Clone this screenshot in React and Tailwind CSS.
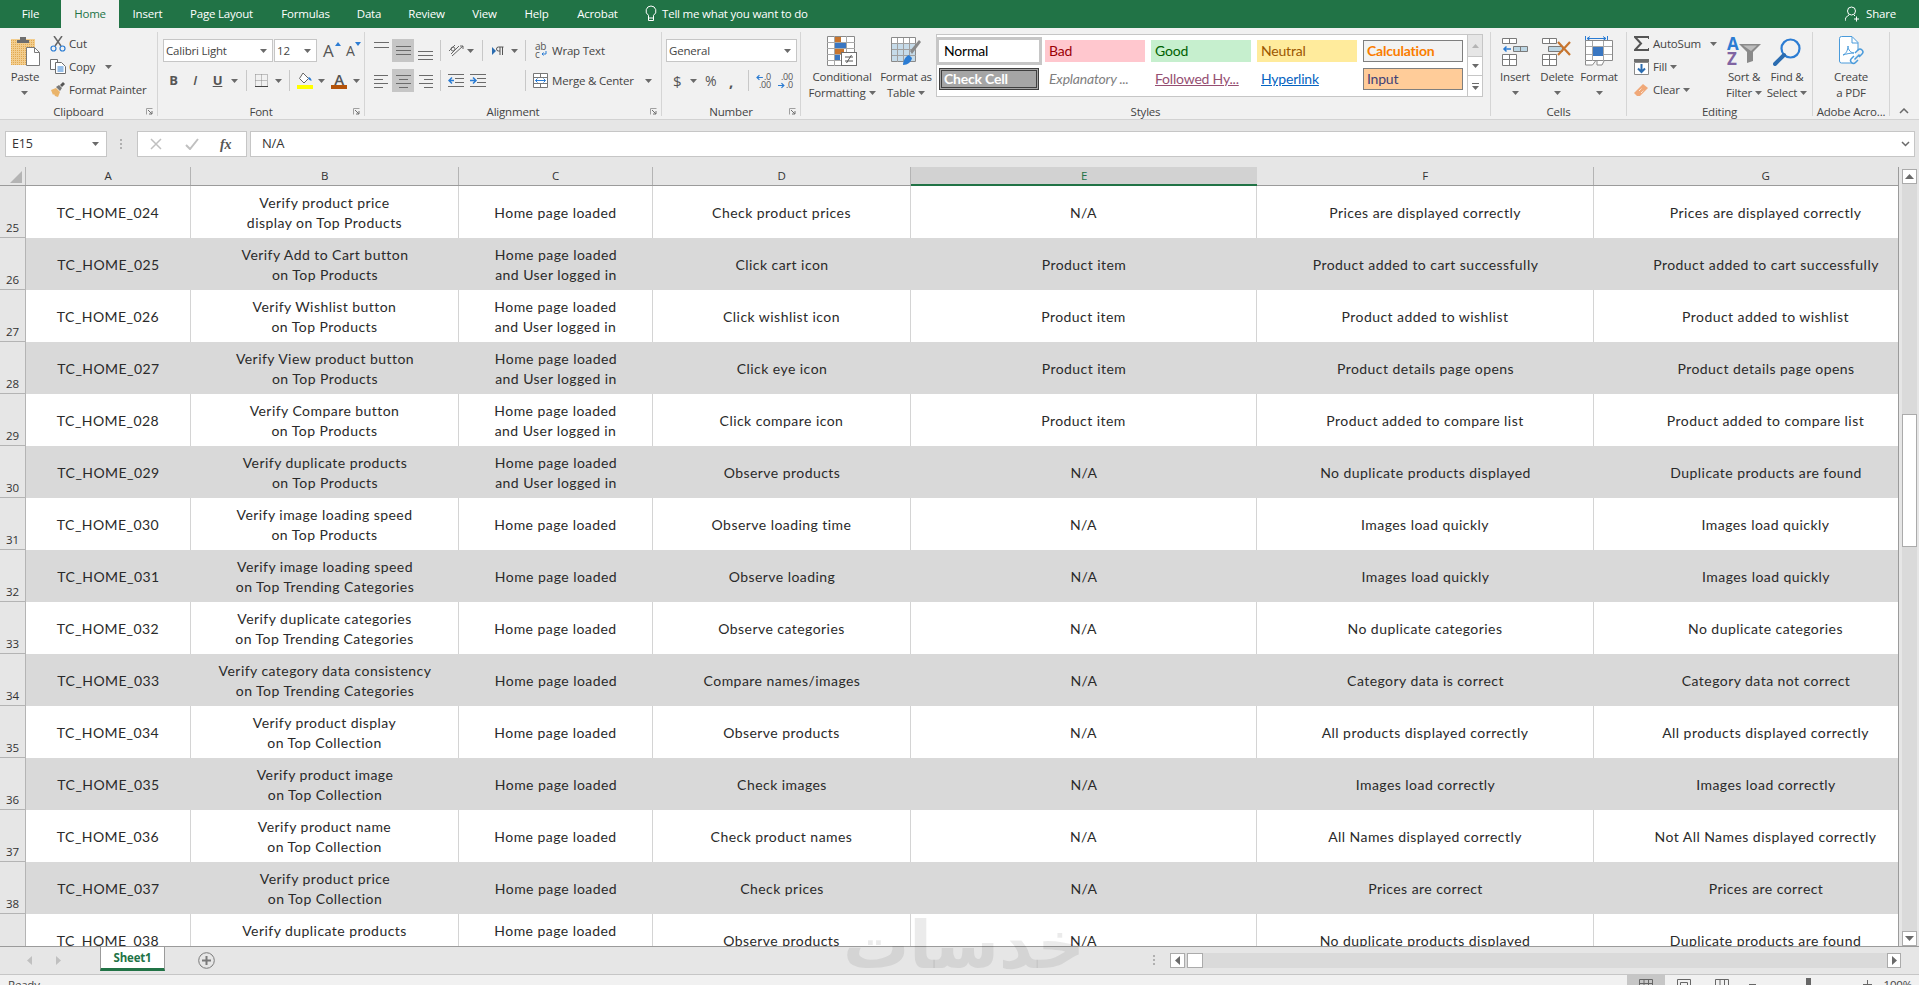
import React from "react";

const HP = ["Home page loaded"];
const HU = ["Home page loaded", "and User logged in"];

const rows = [
  [25, "TC_HOME_024", ["Verify product price", "display on Top Products"], HP, "Check product prices", "N/A", "Prices are displayed correctly", "Prices are displayed correctly"],
  [26, "TC_HOME_025", ["Verify Add to Cart button", "on Top Products"], HU, "Click cart icon", "Product item", "Product added to cart successfully", "Product added to cart successfully"],
  [27, "TC_HOME_026", ["Verify Wishlist button", "on Top Products"], HU, "Click wishlist icon", "Product item", "Product added to wishlist", "Product added to wishlist"],
  [28, "TC_HOME_027", ["Verify View product button", "on Top Products"], HU, "Click eye icon", "Product item", "Product details page opens", "Product details page opens"],
  [29, "TC_HOME_028", ["Verify Compare button", "on Top Products"], HU, "Click compare icon", "Product item", "Product added to compare list", "Product added to compare list"],
  [30, "TC_HOME_029", ["Verify duplicate products", "on Top Products"], HU, "Observe products", "N/A", "No duplicate products displayed", "Duplicate products are found"],
  [31, "TC_HOME_030", ["Verify image loading speed", "on Top Products"], HP, "Observe loading time", "N/A", "Images load quickly", "Images load quickly"],
  [32, "TC_HOME_031", ["Verify image loading speed", "on Top Trending Categories"], HP, "Observe loading", "N/A", "Images load quickly", "Images load quickly"],
  [33, "TC_HOME_032", ["Verify duplicate categories", "on Top Trending Categories"], HP, "Observe categories", "N/A", "No duplicate categories", "No duplicate categories"],
  [34, "TC_HOME_033", ["Verify category data consistency", "on Top Trending Categories"], HP, "Compare names/images", "N/A", "Category data is correct", "Category data not correct"],
  [35, "TC_HOME_034", ["Verify product display", "on Top Collection"], HP, "Observe products", "N/A", "All products displayed correctly", "All products displayed correctly"],
  [36, "TC_HOME_035", ["Verify product image", "on Top Collection"], HP, "Check images", "N/A", "Images load correctly", "Images load correctly"],
  [37, "TC_HOME_036", ["Verify product name", "on Top Collection"], HP, "Check product names", "N/A", "All Names displayed correctly", "Not All Names displayed correctly"],
  [38, "TC_HOME_037", ["Verify product price", "on Top Collection"], HP, "Check prices", "N/A", "Prices are correct", "Prices are correct"],
  [39, "TC_HOME_038", ["Verify duplicate products", "on Top Collection"], HU, "Observe products", "N/A", "No duplicate products displayed", "Duplicate products are found"],
];

const colWidths = ["w-[165px]", "w-[268px]", "w-[194px]", "w-[258px]", "w-[346px]", "w-[337px]", "w-[344px]"];

const tabs = [
  ["File", "w-[61px]"],
  ["Home", "w-[58px]"],
  ["Insert", "w-[57px]"],
  ["Page Layout", "w-[91px]"],
  ["Formulas", "w-[77px]"],
  ["Data", "w-[50px]"],
  ["Review", "w-[65px]"],
  ["View", "w-[51px]"],
  ["Help", "w-[53px]"],
  ["Acrobat", "w-[69px]"],
];

function Caret({ className = "" }) {
  return (
    <svg width="7" height="4" viewBox="0 0 7 4" className={"shrink-0 " + className}>
      <path d="M0 0h7L3.500 4z" fill="#6a6a6a" />
    </svg>
  );
}

function Sep({ className = "" }) {
  return <div className={"w-px h-[21px] bg-[#c8c8c8] shrink-0 " + className} />;
}

function Lines({ w = 15, h = 16, lines, className = "" }) {
  return (
    <svg width={w} height={h} viewBox={`0 0 ${w} ${h}`} className={"shrink-0 " + className}>
      {lines.map(([a, b, y], i) => (
        <line key={i} x1={a} x2={b} y1={y + 0.5} y2={y + 0.5} stroke="#6b6b6b" strokeWidth="1" />
      ))}
    </svg>
  );
}

function Launcher() {
  return (
    <svg width="7" height="7" viewBox="0 0 7 7" className="absolute right-[4px] bottom-[1px]">
      <path d="M.5 6.500V.5h6" fill="none" stroke="#a0a0a0" />
      <path d="M2 2l4 4M6 3v3H3" fill="none" stroke="#707070" />
    </svg>
  );
}

function Group({ className, label, launcher, children }) {
  return (
    <div className={"relative flex flex-col h-[84px] mt-[4px] border-r border-[#d5d5d5] shrink-0 " + className}>
      <div className="h-[72px] shrink-0">{children}</div>
      <div className="h-[16px] shrink-0 leading-[16px] text-center text-[#444] whitespace-nowrap">{label}</div>
      {launcher && <Launcher />}
    </div>
  );
}

function BigButton({ className, icon, lines, caretInline, caretBelow }) {
  return (
    <div className={"flex flex-col items-center shrink-0 " + className}>
      <div className="h-[34px] flex items-end justify-center">{icon}</div>
      <div className="mt-[3px]">
        {lines.map((l, i) => (
          <div key={i} className="h-[16px] leading-[16px] flex items-center justify-center gap-[3px] whitespace-nowrap text-[#444]">
            {l}
            {caretInline && i === lines.length - 1 && <Caret />}
          </div>
        ))}
        {caretBelow && (
          <div className="h-[16px] flex items-center justify-center">
            <Caret />
          </div>
        )}
      </div>
    </div>
  );
}

function SmallRow({ icon, children, caret }) {
  return (
    <div className="h-[23px] flex items-center whitespace-nowrap text-[#444]">
      <div className="w-[19px] flex shrink-0">{icon}</div>
      {children}
      {caret}
    </div>
  );
}

function PasteIcon() {
  return (
    <svg width="29" height="30" viewBox="0 0 29 30">
      <defs>
        <pattern id="dots" width="2" height="2" patternUnits="userSpaceOnUse">
          <rect width="2" height="2" fill="#f2cd8e" />
          <rect width="1" height="1" fill="#e2a951" />
        </pattern>
      </defs>
      <rect x="0" y="3" width="24" height="26" fill="url(#dots)" />
      <path d="M6 4h3V1h6v3h3v3H6z" fill="#6e6e6e" />
      <path d="M15.500 11.500h8l5 5v13h-13z" fill="#fff" stroke="#7a7a7a" />
      <path d="M23.500 11.500v5h5" fill="none" stroke="#7a7a7a" />
    </svg>
  );
}

function CutIcon() {
  return (
    <svg width="16" height="16" viewBox="0 0 16 16">
      <path d="M12 0L5 10M4 0l7 10" stroke="#666" strokeWidth="1.500" fill="none" />
      <circle cx="3.500" cy="12.500" r="2.500" fill="none" stroke="#2b7cd3" strokeWidth="1.200" />
      <circle cx="12.500" cy="12.500" r="2.500" fill="none" stroke="#2b7cd3" strokeWidth="1.200" />
    </svg>
  );
}

function CopyIcon() {
  return (
    <svg width="16" height="15" viewBox="0 0 16 15">
      <path d="M.5.5h7v10h-7z" fill="#fff" stroke="#6e6e6e" />
      <path d="M5.500 3.500h6l4 4v7h-10z" fill="#fff" stroke="#6e6e6e" />
      <path d="M7.500 8h6M7.500 10h6M7.500 12h6" stroke="#2b7cd3" />
    </svg>
  );
}

function PainterIcon() {
  return (
    <svg width="16" height="15" viewBox="0 0 16 15">
      <path d="M1 8l5-2 4 4-2 5-3-1-1-2-1 1z" fill="#eab46a" />
      <path d="M6 5l3-2 3 3-2 3z" fill="#777" />
      <path d="M10 3l3-3 2 2-3 3z" fill="#555" />
    </svg>
  );
}

function BordersIcon() {
  return (
    <svg width="13" height="13" viewBox="0 0 13 13">
      <path d="M.5.5h12v12M.5.5v12M6.500.5v12M.5 6.500h12" stroke="#8a8a8a" strokeDasharray="1 1" fill="none" />
      <path d="M0 12.500h13" stroke="#444" />
    </svg>
  );
}

function FillIcon() {
  return (
    <svg width="16" height="17" viewBox="0 0 16 17">
      <path d="M6 1l5.500 5.500L7 11 2.500 6.500z" fill="#fff" stroke="#666" />
      <path d="M11.500 5c2 .5 3 2 3 4-1.500-.5-2-1-3-2z" fill="#2b7cd3" />
      <rect x="0" y="13" width="16" height="4" fill="#ffff00" />
    </svg>
  );
}

function FontColorIcon() {
  return (
    <div className="w-[16px] h-[17px] flex flex-col items-center shrink-0">
      <div className="h-[13px] leading-[14px] text-[15px] font-semibold text-[#555]">A</div>
      <div className="w-[16px] h-[4px] bg-[#b45309]" />
    </div>
  );
}

function OrientIcon() {
  return (
    <svg width="16" height="16" viewBox="0 0 16 16">
      <path d="M1 8l6-6M3 11l8-8" stroke="#666" fill="none" />
      <path d="M4 13L15 3m0 0h-3m3 0v3" stroke="#666" fill="none" />
      <circle cx="5" cy="6" r="2" fill="none" stroke="#666" />
    </svg>
  );
}

function RtlIcon() {
  return (
    <svg width="12" height="10" viewBox="0 0 12 10">
      <path d="M0 1l4 4-4 4z" fill="#2b6cb0" />
      <path d="M8 1H6.500a2 2 0 000 4H8M8 1v8M10.500 1v8M8 1h3.500" stroke="#555" fill="none" />
    </svg>
  );
}

function IndentIcon({ flip }) {
  return (
    <svg width="16" height="13" viewBox="0 0 16 13">
      <path d="M0 .5h16M7 4.500h9M7 8.500h9M0 12.500h16" stroke="#6b6b6b" />
      {flip ? (
        <path d="M0 6.500h5M3 3.500l3 3-3 3" stroke="#2b7cd3" strokeWidth="1.500" fill="none" />
      ) : (
        <path d="M6 6.500H1M4 3.500l-3 3 3 3" stroke="#2b7cd3" strokeWidth="1.500" fill="none" />
      )}
    </svg>
  );
}

function WrapIcon() {
  return (
    <div className="w-[12px] h-[17px] text-[10px] leading-[8px] text-[#555] shrink-0">
      <div>ab</div>
      <div className="flex items-center">
        c
        <svg width="6" height="6" viewBox="0 0 6 6" className="ml-[1px]">
          <path d="M5 0v3H1m1.500-1.500L1 3l1.500 1.500" stroke="#2b7cd3" fill="none" />
        </svg>
      </div>
    </div>
  );
}

function MergeIcon() {
  return (
    <svg width="15" height="15" viewBox="0 0 15 15">
      <path d="M.5.5h14v14H.5zM.5 4.500h14M.5 10.500h14M7.500.5v4M7.500 10.500v4" fill="#fff" stroke="#777" />
      <path d="M2.500 7.500h10M4.500 5.500l-2 2 2 2M10.500 5.500l2 2-2 2" stroke="#2b7cd3" fill="none" />
    </svg>
  );
}

function DecimalIcon({ inc }) {
  return (
    <div className="w-[15px] h-[15px] flex flex-col text-[9px] leading-[8px] text-[#555] shrink-0">
      <div className="flex items-center justify-end gap-[1px]">
        {!inc && (
          <svg width="7" height="7" viewBox="0 0 7 7">
            <path d="M7 3.500H1M3.500 1L1 3.500 3.500 6" stroke="#2b7cd3" strokeWidth="1.200" fill="none" />
          </svg>
        )}
        {inc ? ".00" : ".0"}
      </div>
      <div className="flex items-center justify-end gap-[1px]">
        {inc && (
          <svg width="7" height="7" viewBox="0 0 7 7">
            <path d="M0 3.500h6M3.500 1L6 3.500 3.500 6" stroke="#2b7cd3" strokeWidth="1.200" fill="none" />
          </svg>
        )}
        {inc ? ".0" : ".00"}
      </div>
    </div>
  );
}

function CondIcon() {
  return (
    <svg width="30" height="30" viewBox="0 0 30 30">
      <path d="M.5.5h27v29H.5z" fill="#fff" stroke="#8a8a8a" />
      <path d="M7.500 0v30M19.500 0v30M0 6.500h28M0 12.500h28M0 18.500h28M0 24.500h28" stroke="#a8a8a8" />
      <rect x="8" y="1" width="6" height="5" fill="#c8752e" />
      <rect x="8" y="7" width="11" height="5" fill="#3a77c2" />
      <rect x="8" y="13" width="9" height="5" fill="#c8752e" />
      <rect x="8" y="19" width="5" height="5" fill="#3a77c2" />
      <rect x="14.500" y="16.500" width="15" height="13" fill="#fff" stroke="#6e6e6e" />
      <path d="M18 21h8M18 25h8M24.500 19l-5 8" stroke="#555" fill="none" />
    </svg>
  );
}

function TableIcon() {
  return (
    <svg width="30" height="30" viewBox="0 0 30 30">
      <path d="M.5 1.500h24v24H.5z" fill="#fff" stroke="#8a8a8a" />
      <rect x="1" y="8" width="23" height="17" fill="#c6dbe9" />
      <path d="M6.500 2v24M12.500 2v24M18.500 2v24M1 7.500h24M1 13.500h24M1 19.500h24" stroke="#a0a0a0" />
      <path d="M19 15l9-11 2 2-9 12z" fill="#8a8a8a" />
      <path d="M12 29c0-5 3-9 6-10l3 3c-1 4-4 7-9 7z" fill="#2b7cd3" />
    </svg>
  );
}

function InsertIcon() {
  return (
    <svg width="26" height="28" viewBox="0 0 26 28">
      <path d="M.5.5h14v5H.5zM7.500.5v5" fill="#fff" stroke="#7a7a7a" />
      <path d="M11.500 8.500h14v5h-14zM18.500 8.500v5" fill="#bcd6e4" stroke="#7a7a7a" />
      <path d="M9 11H2M4.500 8.500L2 11l2.500 2.500" stroke="#2b7cd3" strokeWidth="1.500" fill="none" />
      <path d="M.5 16.500h14v11H.5zM7.500 16.500v11M.5 21.500h14" fill="#fff" stroke="#7a7a7a" />
    </svg>
  );
}

function DeleteIcon() {
  return (
    <svg width="30" height="28" viewBox="0 0 30 28">
      <path d="M.5.5h14v5H.5zM7.500.5v5" fill="#fff" stroke="#7a7a7a" />
      <path d="M6.500 8.500h14v5h-14z" fill="#bcd6e4" stroke="#7a7a7a" />
      <path d="M.5 16.500h14v11H.5zM7.500 16.500v11M.5 21.500h14" fill="#fff" stroke="#7a7a7a" />
      <path d="M16 4l12 13M28 4L16 17" stroke="#c8752e" strokeWidth="2.200" fill="none" />
    </svg>
  );
}

function FormatIcon() {
  return (
    <svg width="28" height="31" viewBox="0 0 28 31">
      <path d="M.5 1v5M22.500 1v5M2 3.500h19M5 1.500L2 3.500l3 2M18 1.500l3 2-3 2" stroke="#2b7cd3" fill="none" />
      <path d="M.5 5.500h27v20H.5z" fill="#fff" stroke="#8a8a8a" />
      <path d="M7.500 6v20M18.500 6v20M1 11.500h26M1 19.500h26" stroke="#a8a8a8" />
      <rect x="8" y="12" width="10" height="9" fill="#3a77c2" />
      <path d="M.5 26v4h7l3-4M12 26v4h5l2-4" fill="#fff" stroke="#8a8a8a" />
    </svg>
  );
}

function SumIcon() {
  return (
    <svg width="15" height="15" viewBox="0 0 15 15">
      <path d="M15 3V1H1l6 6.500L1 14h14v-2" fill="none" stroke="#555" strokeWidth="2" />
    </svg>
  );
}

function DownFillIcon() {
  return (
    <svg width="15" height="16" viewBox="0 0 15 16">
      <rect x="0" y="0" width="15" height="3" fill="#6e6e6e" />
      <path d="M.5 3.500h14v12H.5z" fill="#fff" stroke="#8a8a8a" />
      <path d="M7.500 5v8M4 9.500l3.500 3.500L11 9.500" stroke="#2b6cb0" strokeWidth="2" fill="none" />
    </svg>
  );
}

function ClearIcon() {
  return (
    <svg width="15" height="14" viewBox="0 0 15 14">
      <path d="M0 10l9-9 5 4-8 8H3z" fill="#f0a878" />
      <path d="M5 8l3-3M7 10l3-3" stroke="#fff" strokeDasharray="1 1" />
    </svg>
  );
}

function SortIcon() {
  return (
    <div className="relative w-[34px] h-[30px]">
      <div className="text-[17px] leading-[15px] h-[15px] font-bold text-[#2b7cd3]">A</div>
      <div className="text-[17px] leading-[15px] h-[15px] font-bold text-[#8064a2]">Z</div>
      <svg width="22" height="20" viewBox="0 0 22 20" className="absolute right-0 top-[7px]">
        <path d="M0 1h22l-8 8v9l-6 2V9z" fill="#8a8a8a" />
        <path d="M4 2.500h14l-6 5.500z" fill="#bdbdbd" />
      </svg>
    </div>
  );
}

function FindIcon() {
  return (
    <svg width="28" height="28" viewBox="0 0 28 28">
      <circle cx="17.500" cy="10.500" r="9" fill="none" stroke="#2b7cd3" strokeWidth="2.200" />
      <path d="M11 17L2 26" stroke="#2b6cb0" strokeWidth="4" strokeLinecap="round" />
    </svg>
  );
}

function PdfIcon() {
  return (
    <svg width="26" height="30" viewBox="0 0 26 30">
      <path d="M14 27H3.500a2 2 0 01-2-2V2.500a2 2 0 012-2H14l6 6v8" fill="#fff" stroke="#4a9bdb" />
      <path d="M14 1v6h6" fill="none" stroke="#4a9bdb" />
      <path d="M5 19c3-1 5-5 5-9 0 4 3 7 6 7-4 0-8 1-11 2z" fill="none" stroke="#4a9bdb" />
      <path d="M17 17l3-3a2.800 2.800 0 014 4l-3 3M20 24l-2.500 2.500a2.800 2.800 0 01-4-4L16 20M16.500 23.500l5-5" fill="none" stroke="#4a9bdb" strokeWidth="1.500" />
    </svg>
  );
}

function Combo({ className, text }) {
  return (
    <div className={"h-[23px] bg-white border border-[#c6c6c6] flex items-center justify-between shrink-0 pl-[2px] pr-[5px] text-[#444] " + className}>
      <span>{text}</span>
      <Caret />
    </div>
  );
}

function StyleCell({ className, children }) {
  return (
    <div className={"h-[22px] w-[100px] flex items-center pb-[2px] whitespace-nowrap overflow-hidden font-['Lato',sans-serif] text-[14px] " + className}>
      {children}
    </div>
  );
}

function Ribbon() {
  const hl = "w-[22px] h-[23px] bg-[#c6c6c6] flex items-center justify-center shrink-0";
  return (
    <div className="h-[92px] bg-[#f1f1f1] border-b border-[#d2d2d2] flex shrink-0">
      <Group className="w-[158px]" label="Clipboard" launcher>
        <div className="flex">
          <BigButton className="w-[50px]" icon={<PasteIcon />} lines={["Paste"]} caretBelow />
          <div className="flex flex-col">
            <SmallRow icon={<CutIcon />}>Cut</SmallRow>
            <SmallRow icon={<CopyIcon />} caret={<Caret className="ml-[10px]" />}>Copy</SmallRow>
            <SmallRow icon={<PainterIcon />}>Format Painter</SmallRow>
          </div>
        </div>
      </Group>

      <Group className="w-[207px]" label="Font" launcher>
        <div className="flex items-center mt-[7px] h-[23px] pl-[5px]">
          <Combo className="w-[110px]" text="Calibri Light" />
          <Combo className="w-[43px] ml-[1px]" text="12" />
          <div className="relative ml-[6px] w-[16px] text-[17px] leading-[20px] text-[#555]">
            A
            <svg width="6" height="4" viewBox="0 0 6 4" className="absolute right-[-2px] top-[1px]">
              <path d="M0 4h6L3 0z" fill="#2b7cd3" />
            </svg>
          </div>
          <div className="relative ml-[7px] w-[13px] text-[14px] leading-[20px] text-[#555]">
            A
            <svg width="6" height="4" viewBox="0 0 6 4" className="absolute right-[-2px] top-[1px]">
              <path d="M0 0h6L3 4z" fill="#2b7cd3" />
            </svg>
          </div>
        </div>
        <div className="flex items-center mt-[7px] h-[23px] pl-[5px] text-[13px] text-[#555]">
          <div className="w-[21px] text-center font-bold">B</div>
          <div className="w-[22px] text-center italic font-semibold">I</div>
          <div className="w-[23px] text-center font-bold underline">U</div>
          <Caret className="ml-[2px]" />
          <Sep className="ml-[8px]" />
          <div className="ml-[8px] flex"><BordersIcon /></div>
          <Caret className="ml-[7px]" />
          <Sep className="ml-[7px]" />
          <div className="ml-[7px] flex"><FillIcon /></div>
          <Caret className="ml-[5px]" />
          <div className="ml-[6px]"><FontColorIcon /></div>
          <Caret className="ml-[6px]" />
        </div>
      </Group>

      <Group className="w-[297px]" label="Alignment" launcher>
        <div className="flex items-center mt-[7px] h-[23px]">
          <Lines className="ml-[9px]" h={23} lines={[[0, 15, 3], [0, 15, 8]]} />
          <div className={hl + " ml-[3px]"}><Lines h={11} lines={[[0, 15, 1], [0, 15, 5], [0, 15, 9]]} /></div>
          <Lines className="ml-[4px]" h={23} lines={[[0, 15, 12], [0, 15, 16], [0, 15, 20]]} />
          <Sep className="ml-[7px]" />
          <div className="ml-[7px] flex"><OrientIcon /></div>
          <Caret className="ml-[3px]" />
          <Sep className="ml-[8px]" />
          <div className="ml-[9px] flex"><RtlIcon /></div>
          <Caret className="ml-[7px]" />
          <Sep className="ml-[7px]" />
          <div className="ml-[9px]"><WrapIcon /></div>
          <span className="ml-[5px] text-[#444] whitespace-nowrap">Wrap Text</span>
        </div>
        <div className="flex items-center mt-[7px] h-[23px]">
          <Lines className="ml-[9px]" h={14} lines={[[0, 14, 1], [0, 9, 5], [0, 14, 9], [0, 9, 13]]} />
          <div className={hl + " ml-[3px]"}><Lines h={14} lines={[[0, 15, 1], [3, 12, 5], [0, 15, 9], [3, 12, 13]]} /></div>
          <Lines className="ml-[4px]" h={14} lines={[[1, 15, 1], [6, 15, 5], [1, 15, 9], [6, 15, 13]]} />
          <Sep className="ml-[7px]" />
          <div className="ml-[7px] flex"><IndentIcon /></div>
          <div className="ml-[6px] flex"><IndentIcon flip /></div>
          <Sep className="ml-[39px]" />
          <div className="ml-[7px] flex"><MergeIcon /></div>
          <span className="ml-[4px] w-[93px] shrink-0 text-[#444] whitespace-nowrap">Merge &amp; Center</span>
          <Caret />
        </div>
      </Group>

      <Group className="w-[139px]" label="Number" launcher>
        <div className="flex items-center mt-[7px] h-[23px] pl-[4px]">
          <Combo className="w-[131px]" text="General" />
        </div>
        <div className="flex items-center mt-[7px] h-[23px] text-[#555]">
          <div className="ml-[11px] w-[10px] text-[15px] leading-[20px]">$</div>
          <Caret className="ml-[7px]" />
          <div className="ml-[8px] w-[12px] text-[14px] leading-[20px]">%</div>
          <div className="ml-[12px] w-[6px] text-[15px] leading-[16px] font-bold">,</div>
          <Sep className="ml-[13px]" />
          <div className="ml-[7px]"><DecimalIcon /></div>
          <div className="ml-[7px]"><DecimalIcon inc /></div>
        </div>
      </Group>

      <Group className="w-[690px]" label="Styles">
        <div className="flex pl-[7px]">
          <BigButton className="w-[68px]" icon={<CondIcon />} lines={["Conditional", "Formatting"]} caretInline />
          <BigButton className="w-[60px]" icon={<TableIcon />} lines={["Format as", "Table"]} caretInline />
          <div className="mt-[2px] w-[547px] h-[63px] bg-white border border-[#c6c6c6] flex justify-between">
            <div className="grid grid-cols-[repeat(5,100px)] content-start gap-x-[6px] gap-y-[6px] pl-[2px] pt-[5px]">
              <StyleCell className="bg-white outline-[3px] outline-[#c6c6c6] pl-[5px] text-black">Normal</StyleCell>
              <StyleCell className="bg-[#ffc7ce] text-[#9c0006] pl-[4px]">Bad</StyleCell>
              <StyleCell className="bg-[#c6efce] text-[#006100] pl-[4px]">Good</StyleCell>
              <StyleCell className="bg-[#ffeb9c] text-[#9c5700] pl-[4px]">Neutral</StyleCell>
              <StyleCell className="bg-[#f2f2f2] border border-[#7f7f7f] text-[#fa7d00] font-bold pl-[3px]">Calculation</StyleCell>
              <StyleCell className="bg-[#a5a5a5] border-[3px] border-double border-[#3f3f3f] text-white font-bold pl-[2px]">Check Cell</StyleCell>
              <StyleCell className="text-[#7f7f7f] italic pl-[4px]">Explanatory ...</StyleCell>
              <StyleCell className="text-[#954f72] pl-[4px]"><span className="underline">Followed Hy...</span></StyleCell>
              <StyleCell className="text-[#0563c1] pl-[4px]"><span className="underline">Hyperlink</span></StyleCell>
              <StyleCell className="bg-[#ffcc99] border border-[#7f7f7f] text-[#3f3f76] pl-[3px]">Input</StyleCell>
            </div>
            <div className="w-[15px] border-l border-[#c6c6c6] flex flex-col shrink-0">
              <div className="h-[21px] bg-[#e6e6e6] flex items-center justify-center">
                <Caret className="rotate-180 opacity-40" />
              </div>
              <div className="h-[20px] flex items-center justify-center border-y border-[#c6c6c6]"><Caret /></div>
              <div className="flex-1 flex flex-col items-center justify-center gap-[2px]">
                <div className="w-[7px] h-px bg-[#6a6a6a]" />
                <Caret />
              </div>
            </div>
          </div>
        </div>
      </Group>

      <Group className="w-[136px]" label="Cells">
        <div className="flex pl-[3px]">
          <BigButton className="w-[42px]" icon={<InsertIcon />} lines={["Insert"]} caretBelow />
          <BigButton className="w-[42px]" icon={<DeleteIcon />} lines={["Delete"]} caretBelow />
          <BigButton className="w-[42px]" icon={<FormatIcon />} lines={["Format"]} caretBelow />
        </div>
      </Group>

      <Group className="w-[186px]" label="Editing">
        <div className="flex">
          <div className="w-[95px] pl-[7px] flex flex-col shrink-0">
            <SmallRow icon={<SumIcon />} caret={<Caret className="ml-[9px]" />}>AutoSum</SmallRow>
            <SmallRow icon={<DownFillIcon />} caret={<Caret className="ml-[3px]" />}>Fill</SmallRow>
            <SmallRow icon={<ClearIcon />} caret={<Caret className="ml-[3px]" />}>Clear</SmallRow>
          </div>
          <BigButton className="w-[44px]" icon={<SortIcon />} lines={["Sort &", "Filter"]} caretInline />
          <BigButton className="w-[42px]" icon={<FindIcon />} lines={["Find &", "Select"]} caretInline />
        </div>
      </Group>

      <Group className="w-[77px]" label="Adobe Acro...">
        <BigButton className="w-full" icon={<PdfIcon />} lines={["Create", "a PDF"]} />
      </Group>

      <div className="flex-1 flex justify-center items-end pb-[5px] pr-[1px]">
        <svg width="10" height="6" viewBox="0 0 10 6">
          <path d="M1 5l4-4 4 4" fill="none" stroke="#6a6a6a" strokeWidth="1.500" />
        </svg>
      </div>
    </div>
  );
}

function FormulaBar() {
  return (
    <div className="h-[47px] bg-[#e6e6e6] flex items-start pt-[11px] text-[12.5px] text-[#333] shrink-0">
      <div className="ml-[5px] w-[102px] h-[26px] bg-white border border-[#c6c6c6] flex items-center justify-between pl-[6px] pr-[7px] shrink-0">
        <span>E15</span>
        <Caret />
      </div>
      <div className="ml-[13px] w-[2px] h-[26px] flex flex-col justify-center gap-[2px] shrink-0">
        <div className="h-[2px] bg-[#b0b0b0]" />
        <div className="h-[2px] bg-[#b0b0b0]" />
        <div className="h-[2px] bg-[#b0b0b0]" />
      </div>
      <div className="ml-[15px] w-[110px] h-[26px] bg-white border border-[#c6c6c6] flex items-center shrink-0">
        <svg width="12" height="12" viewBox="0 0 12 12" className="ml-[12px]">
          <path d="M1 1l10 10M11 1L1 11" stroke="#c0c0c0" strokeWidth="1.500" />
        </svg>
        <svg width="14" height="12" viewBox="0 0 14 12" className="ml-[23px]">
          <path d="M1 7l4 4 8-10" fill="none" stroke="#c0c0c0" strokeWidth="2" />
        </svg>
        <span className="ml-[21px] font-['Liberation_Serif',serif] italic font-bold text-[14px] text-[#555]">fx</span>
      </div>
      <div className="ml-[3px] mr-[4px] flex-1 h-[26px] bg-white border border-[#c6c6c6] flex items-center justify-between pl-[11px] pr-[4px]">
        <span className="text-[13px]">N/A</span>
        <svg width="9" height="6" viewBox="0 0 9 6">
          <path d="M1 1l3.500 3.500L8 1" fill="none" stroke="#6a6a6a" strokeWidth="1.500" />
        </svg>
      </div>
    </div>
  );
}

function Grid() {
  return (
    <div className="w-[1899px] border-r border-[#9b9b9b] flex flex-col overflow-hidden shrink-0 bg-white">
      <div className="h-[19px] flex bg-[#e6e6e6] border-b border-[#9b9b9b] shrink-0 text-[#333]">
        <div className="w-[26px] shrink-0 border-r border-[#b4b4b4] flex items-end justify-end pr-[3px] pb-[2px]">
          <svg width="12" height="12" viewBox="0 0 12 12">
            <path d="M12 0v12H0z" fill="#b4b4b4" />
          </svg>
        </div>
        {["A", "B", "C", "D", "E", "F", "G"].map((c, i) =>
          c === "E" ? (
            <div key={c} className={"-mb-px h-[19px] bg-[#d2d2d2] border-b-2 border-[#217346] text-[#217346] text-center leading-[17px] shrink-0 " + colWidths[i]}>
              {c}
            </div>
          ) : (
            <div key={c} className={"border-r border-[#b4b4b4] text-center leading-[18px] shrink-0 " + colWidths[i]}>
              {c}
            </div>
          )
        )}
      </div>
      {rows.map((r, ri) => {
        const grey = ri % 2 === 1;
        return (
          <div key={r[0]} className="flex h-[52px] shrink-0">
            <div className="w-[26px] shrink-0 bg-[#e6e6e6] border-r border-b border-[#b4b4b4] flex items-end justify-center leading-[16px] pb-[1px] text-[#333]">
              {r[0] === 39 ? "" : r[0]}
            </div>
            {r.slice(1).map((cell, i) => (
              <div
                key={i}
                className={
                  "shrink-0 flex flex-col items-center justify-center pt-[2px] leading-[20px] font-['Lato',sans-serif] tracking-[0.45px] text-[14px] text-[#2a2a2a] whitespace-nowrap " +
                  colWidths[i] +
                  (grey ? " bg-[#d9d9d9]" : " bg-white border-r border-[#d4d4d4]")
                }
              >
                {Array.isArray(cell) ? cell.map((l) => <div key={l}>{l}</div>) : cell}
              </div>
            ))}
          </div>
        );
      })}
    </div>
  );
}

function VScroll() {
  return (
    <div className="flex-1 bg-[#e6e6e6] flex flex-col pl-[3px] pr-[2px] pt-[2px]">
      <div className="h-[15px] bg-white border border-[#ababab] flex items-center justify-center shrink-0">
        <svg width="9" height="5" viewBox="0 0 9 5"><path d="M0 5h9L4.500 0z" fill="#6a6a6a" /></svg>
      </div>
      <div className="flex-1 bg-[#dadada] pt-[230px]">
        <div className="h-[133px] bg-white border border-[#ababab]" />
      </div>
      <div className="h-[15px] bg-white border border-[#ababab] flex items-center justify-center shrink-0">
        <svg width="9" height="5" viewBox="0 0 9 5"><path d="M0 0h9L4.500 5z" fill="#6a6a6a" /></svg>
      </div>
    </div>
  );
}

function SheetBar() {
  return (
    <div className="h-[29px] bg-[#e6e6e6] border-t border-[#9b9b9b] border-b border-b-[#c6c6c6] flex items-start shrink-0">
      <svg width="5" height="9" viewBox="0 0 5 9" className="ml-[27px] mt-[9px]"><path d="M5 0v9L0 4.500z" fill="#c0c0c0" /></svg>
      <svg width="5" height="9" viewBox="0 0 5 9" className="ml-[24px] mt-[9px]"><path d="M0 0v9l5-4.500z" fill="#c0c0c0" /></svg>
      <div className="ml-[39px] w-[65px] h-[24px] bg-white border-x border-[#9b9b9b] border-b-[3px] border-b-[#217346] text-center text-[#217346] font-bold leading-[21px] shrink-0">
        Sheet1
      </div>
      <svg width="17" height="17" viewBox="0 0 17 17" className="ml-[33px] mt-[5px]">
        <circle cx="8.500" cy="8.500" r="7.800" fill="none" stroke="#7a7a7a" />
        <path d="M4 8.500h9M8.500 4v9" stroke="#7a7a7a" strokeWidth="2" />
      </svg>
      <div className="ml-[938px] mt-[8px] w-[2px] flex flex-col gap-[2px] shrink-0">
        <div className="h-[2px] bg-[#b0b0b0]" />
        <div className="h-[2px] bg-[#b0b0b0]" />
        <div className="h-[2px] bg-[#b0b0b0]" />
      </div>
      <div className="ml-[15px] mt-[6px] w-[731px] h-[15px] bg-[#dadada] flex shrink-0">
        <div className="w-[15px] bg-white border border-[#ababab] flex items-center justify-center">
          <svg width="5" height="9" viewBox="0 0 5 9"><path d="M5 0v9L0 4.500z" fill="#6a6a6a" /></svg>
        </div>
        <div className="w-[16px] ml-[2px] bg-white border border-[#ababab]" />
        <div className="flex-1" />
        <div className="w-[14px] bg-white border border-[#ababab] flex items-center justify-center">
          <svg width="5" height="9" viewBox="0 0 5 9"><path d="M0 0v9l5-4.500z" fill="#6a6a6a" /></svg>
        </div>
      </div>
    </div>
  );
}

function StatusBar() {
  return (
    <div className="h-[19px] bg-[#f1f1f1] flex items-center text-[#444] shrink-0">
      <span className="ml-[8px]">Ready</span>
      <div className="ml-auto flex items-center">
        <div className="w-[38px] h-[19px] bg-[#c6c6c6] flex items-center justify-center">
          <svg width="14" height="12" viewBox="0 0 14 12"><path d="M.5.5h13v11H.5zM.5 4.500h13M.5 8h13M5 .5v11M9.500.5v11" fill="none" stroke="#666" /></svg>
        </div>
        <svg width="14" height="12" viewBox="0 0 14 12" className="ml-[12px]"><path d="M.5.5h13v11H.5zM3.500 3.500h7v8h-7z" fill="none" stroke="#666" /></svg>
        <svg width="14" height="12" viewBox="0 0 14 12" className="ml-[24px]"><path d="M.5.5h13v11H.5zM5 .5v11M9.500.5v11" fill="none" stroke="#666" /></svg>
        <div className="ml-[20px] w-[7px] h-px bg-[#666]" />
        <div className="ml-[50px] w-[5px] h-[14px] bg-[#666]" />
        <div className="ml-[52px] relative w-[9px] h-[9px] flex items-center justify-center">
          <div className="w-[9px] h-px bg-[#666]" />
          <div className="absolute w-px h-[9px] bg-[#666]" />
        </div>
        <span className="ml-[12px] mr-[7px]">100%</span>
      </div>
    </div>
  );
}

export default function App() {
  return (
    <div className="relative h-[985px] w-full overflow-hidden flex flex-col bg-white font-['Open_Sans',sans-serif] text-[11.5px] tracking-[-0.2px]">
      <div className="h-[28px] bg-[#217346] text-white flex items-center shrink-0">
        {tabs.map(([t, w]) => (
          <div
            key={t}
            className={"h-full flex items-center justify-center shrink-0 " + w + (t === "Home" ? " bg-[#f1f1f1] text-[#217346]" : "")}
          >
            {t}
          </div>
        ))}
        <svg width="14" height="18" viewBox="0 0 14 18" className="ml-[12px]">
          <path d="M4.500 13v2.500M9.500 13v2.500M4.500 15.500h5M7 1a5 5 0 00-2.500 9.300V13h5v-2.700A5 5 0 007 1z" fill="none" stroke="#fff" />
        </svg>
        <span className="ml-[4px] whitespace-nowrap">Tell me what you want to do</span>
        <svg width="14" height="16" viewBox="0 0 14 16" className="ml-auto">
          <circle cx="6.500" cy="5" r="4" fill="none" stroke="#fff" />
          <path d="M0 15c0-3 2-5 4-6M9 9l1 1M9 13h5M11.500 10.500v5" fill="none" stroke="#fff" />
        </svg>
        <span className="ml-[7px] mr-[23px]">Share</span>
      </div>
      <Ribbon />
      <FormulaBar />
      <div className="h-[779px] shrink-0 flex">
        <Grid />
        <VScroll />
      </div>
      <SheetBar />
      <StatusBar />
      <div className="absolute left-[843px] top-[906px] text-[66px] leading-[80px] font-bold font-['DejaVu_Sans',sans-serif] text-black/[0.08] pointer-events-none tracking-normal" dir="rtl">
        خدسات
      </div>
    </div>
  );
}
